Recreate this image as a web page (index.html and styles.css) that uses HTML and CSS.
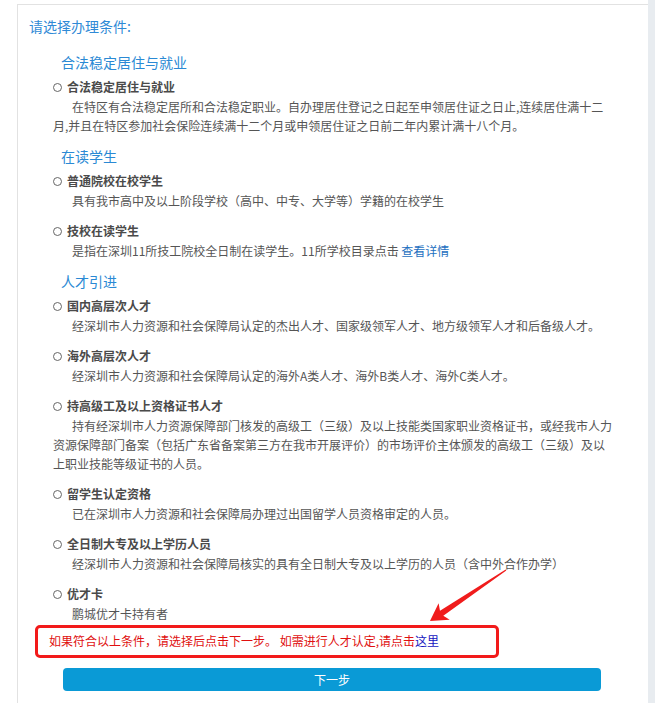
FILE: index.html
```html
<!DOCTYPE html>
<html lang="zh-CN">
<head>
    <meta charset="UTF-8">
    <meta name="viewport" content="width=device-width, initial-scale=1.0">
    <title>请选择办理条件</title>
    <link rel="stylesheet" href="styles.css">
</head>
<body>
    <div class="panel">
        <div class="panel-title">请选择办理条件:</div>

        <div class="conditions">
            <div class="group-title">合法稳定居住与就业</div>
            <div class="item">
                <div class="item-title"><span class="radio"></span>合法稳定居住与就业</div>
                <div class="item-desc">在特区有合法稳定居所和合法稳定职业。自办理居住登记之日起至申领居住证之日止,连续居住满十二月,并且在特区参加社会保险连续满十二个月或申领居住证之日前二年内累计满十八个月。</div>
            </div>

            <div class="group-title">在读学生</div>
            <div class="item">
                <div class="item-title"><span class="radio"></span>普通院校在校学生</div>
                <div class="item-desc">具有我市高中及以上阶段学校（高中、中专、大学等）学籍的在校学生</div>
            </div>
            <div class="item">
                <div class="item-title"><span class="radio"></span>技校在读学生</div>
                <div class="item-desc">是指在深圳11所技工院校全日制在读学生。11所学校目录点击 <a class="detail-link" href="#">查看详情</a></div>
            </div>

            <div class="group-title">人才引进</div>
            <div class="item">
                <div class="item-title"><span class="radio"></span>国内高层次人才</div>
                <div class="item-desc">经深圳市人力资源和社会保障局认定的杰出人才、国家级领军人才、地方级领军人才和后备级人才。</div>
            </div>
            <div class="item">
                <div class="item-title"><span class="radio"></span>海外高层次人才</div>
                <div class="item-desc">经深圳市人力资源和社会保障局认定的海外A类人才、海外B类人才、海外C类人才。</div>
            </div>
            <div class="item">
                <div class="item-title"><span class="radio"></span>持高级工及以上资格证书人才</div>
                <div class="item-desc">持有经深圳市人力资源保障部门核发的高级工（三级）及以上技能类国家职业资格证书，或经我市人力资源保障部门备案（包括广东省备案第三方在我市开展评价）的市场评价主体颁发的高级工（三级）及以上职业技能等级证书的人员。</div>
            </div>
            <div class="item">
                <div class="item-title"><span class="radio"></span>留学生认定资格</div>
                <div class="item-desc">已在深圳市人力资源和社会保障局办理过出国留学人员资格审定的人员。</div>
            </div>
            <div class="item">
                <div class="item-title"><span class="radio"></span>全日制大专及以上学历人员</div>
                <div class="item-desc">经深圳市人力资源和社会保障局核实的具有全日制大专及以上学历的人员（含中外合作办学）</div>
            </div>
            <div class="item">
                <div class="item-title"><span class="radio"></span>优才卡</div>
                <div class="item-desc">鹏城优才卡持有者</div>
            </div>
        </div>

        <div class="note">如果符合以上条件，请选择后点击下一步。 如需进行人才认定,请点击<a class="note-link" href="#">这里</a></div>

        <button class="next-btn">下一步</button>
    </div>
    <div class="side-strip"></div>

    <!-- 标注箭头 -->
    <svg class="mark-arrow" width="88" height="62" viewBox="0 0 88 62">
        <polygon fill="#f01c1c" points="82.3,5.5 19.3,50.7 25.7,54.8 6,56 14.6,38.2 16,45.7 81.7,4.5"/>
    </svg>
</body>
</html>
```

FILE: styles.css
```css
body {
    margin: 0;
    background-color: #fff;
    font-family: "Noto Sans CJK SC", "Microsoft YaHei", sans-serif;
    font-size: 12px;
    color: #555;
    display: flex;
    position: relative;
    overflow: hidden;
}
.panel {
    flex: 1;
    margin: 4px 0 0 17px;
    padding: 11px 0 12px 0;
    border-top: 1px solid #e2e2e2;
    border-left: 1px solid #e2e2e2;
}
.side-strip {
    width: 7px;
    background-color: #e8ecf0;
}
.panel-title {
    padding-left: 11px;
    font-size: 14px;
    line-height: 20px;
    color: #2f8ad6;
}
.conditions {
    margin-top: 16px;
    padding: 0 35px;
}
.group-title {
    padding-left: 8px;
    margin-bottom: 4px;
    font-size: 14px;
    line-height: 21px;
    color: #2a89d4;
}
.item {
    margin-bottom: 11px;
}
.item:last-child {
    margin-bottom: 0;
}
.item-title {
    display: flex;
    align-items: center;
    font-weight: bold;
    line-height: 20px;
    color: #4a4a4a;
}
.radio {
    width: 9px;
    height: 9px;
    box-sizing: border-box;
    border: 1px solid #666;
    border-radius: 50%;
    margin-right: 5px;
}
.item-desc {
    text-indent: 19px;
    line-height: 19px;
    color: #555;
}
.detail-link {
    color: #1d6fc0;
    text-decoration: none;
}
.note {
    width: 464px;
    box-sizing: border-box;
    margin: 2px 0 0 17px;
    padding: 3px 0 4px 11px;
    border: 3px solid #f21a1a;
    border-radius: 5px;
    line-height: 20px;
    color: #e01010;
}
.note-link {
    color: #1515c0;
    text-decoration: none;
}
.next-btn {
    display: block;
    width: 538px;
    height: 23px;
    margin: 10px 0 0 45px;
    padding: 0;
    border: none;
    border-radius: 4px;
    background-color: #0a9ad6;
    color: #fff;
    font-family: inherit;
    font-size: 12px;
    cursor: pointer;
}
.mark-arrow {
    position: absolute;
    left: 424px;
    top: 565px;
    pointer-events: none;
}
```
